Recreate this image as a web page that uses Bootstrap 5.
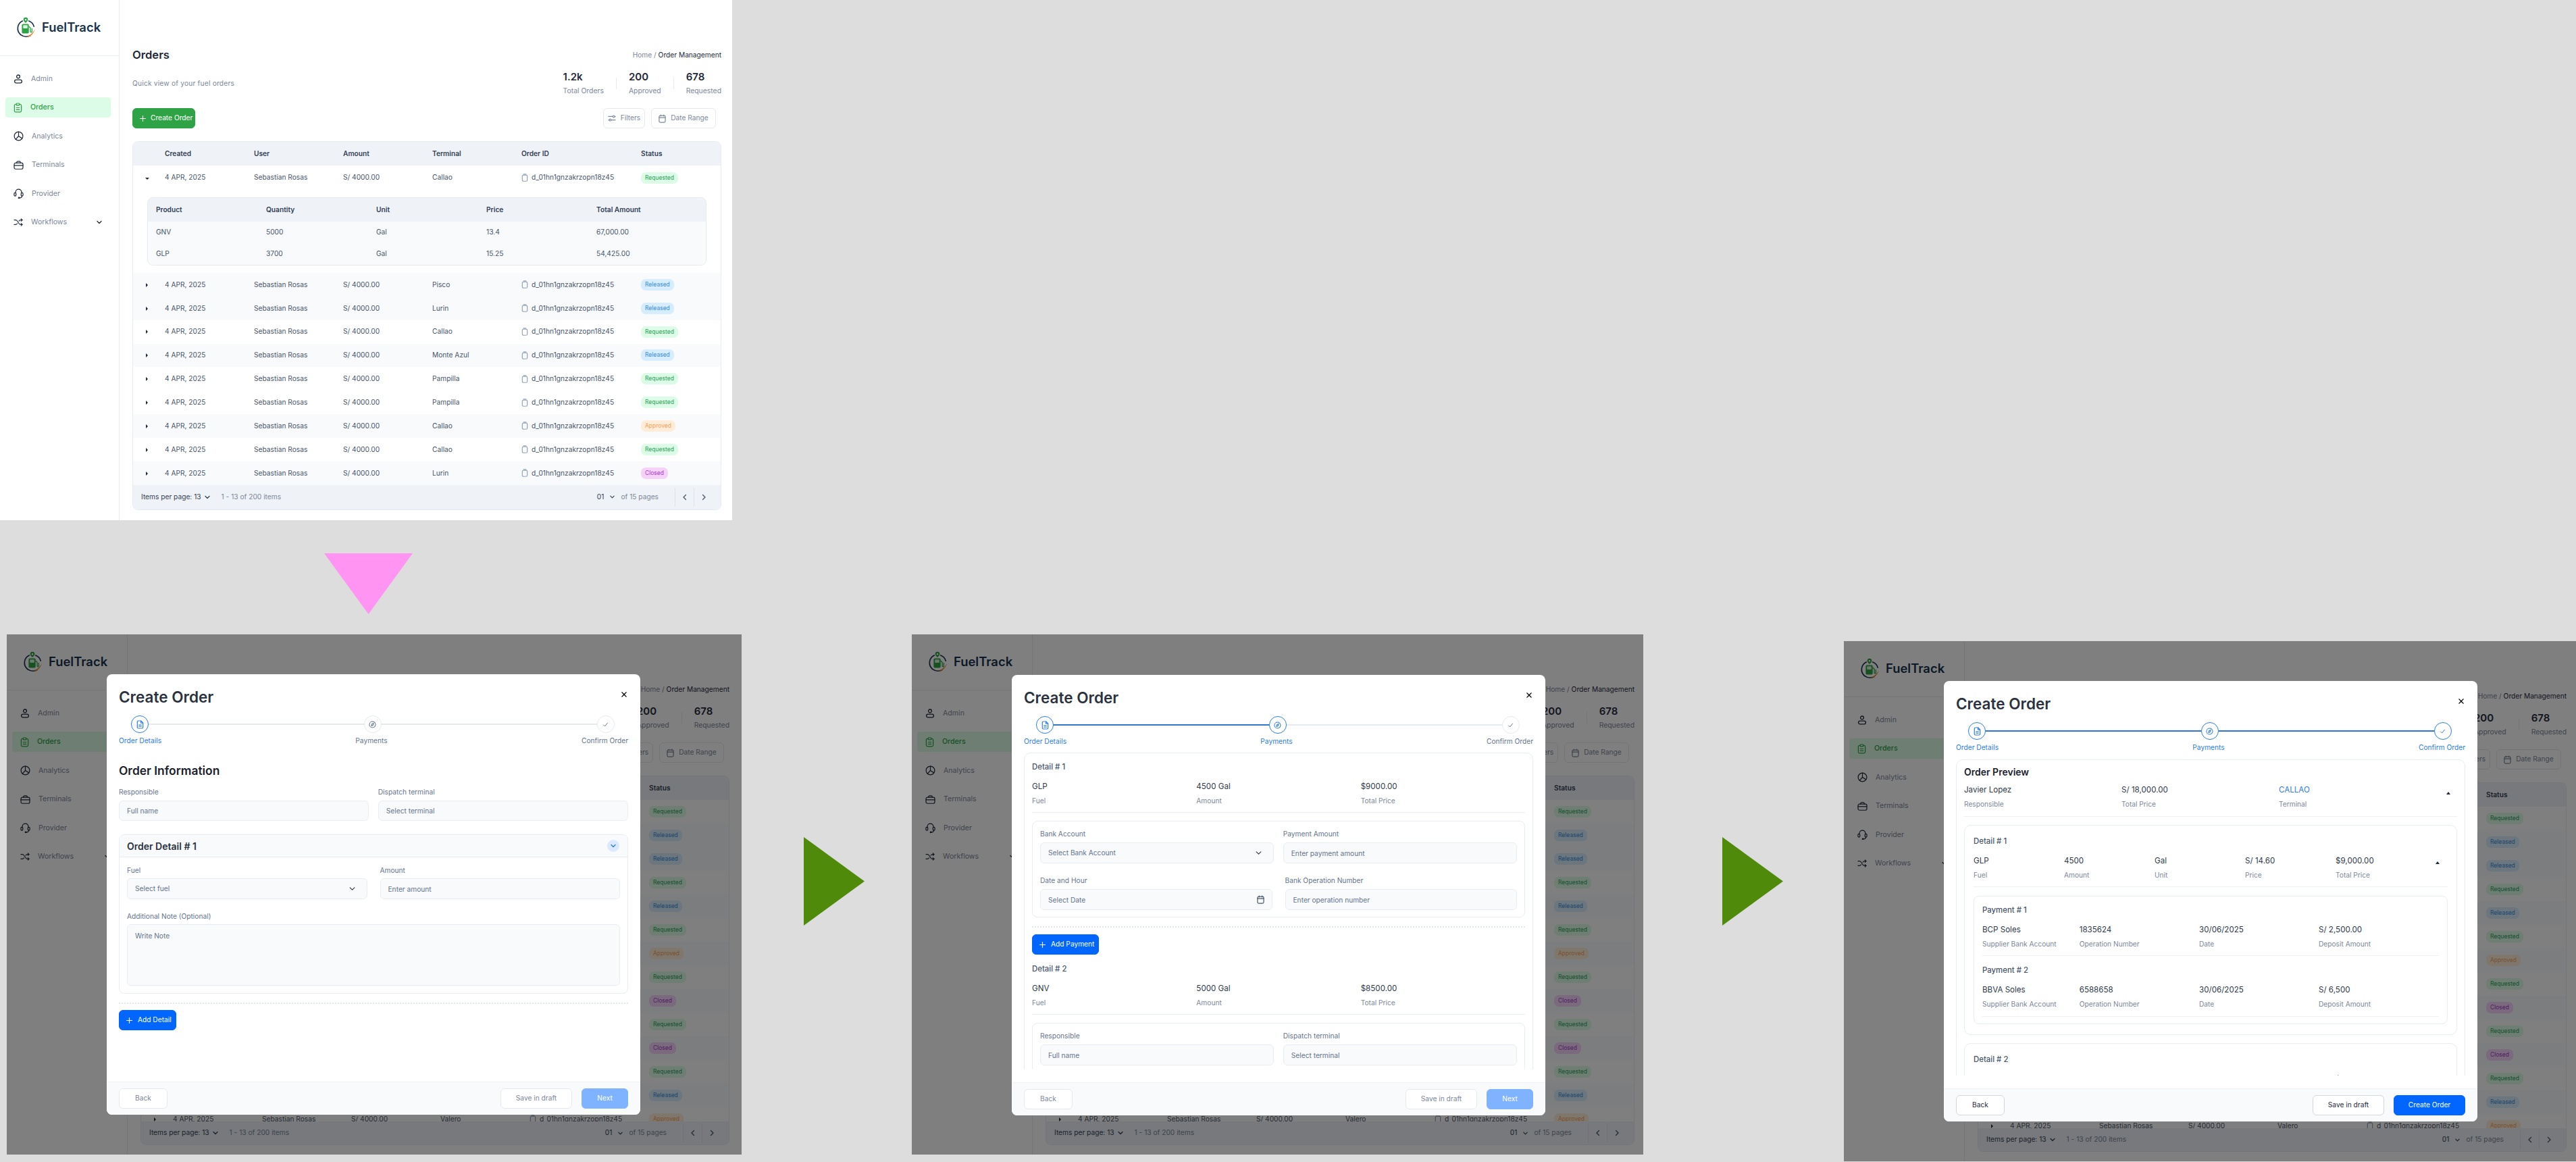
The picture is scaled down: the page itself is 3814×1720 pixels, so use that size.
<!DOCTYPE html>
<html lang="en">
<head>
  <meta charset="UTF-8">
  <meta name="viewport" content="width=device-width, initial-scale=1.0">
  <title>FuelTrack - Create Order flow</title>
  <link href="https://cdn.jsdelivr.net/npm/bootstrap@5.3.0/dist/css/bootstrap.min.css" rel="stylesheet">
  <style>
    html, body { height: 1720px; overflow: hidden; }
    body { position: relative; background: #dddddd; font-family: Inter, "Liberation Sans", sans-serif; font-size: 10.2px; color: #334155; }
    svg.ico { fill: none; stroke: currentColor; stroke-width: 1.3; stroke-linecap: round; stroke-linejoin: round; flex: none; }

    /* frames on the board */
    .ft-frame { position: absolute; overflow: hidden; background: #fff; height: 770px; }
    .ft-f1 { left: 0; top: 0; width: 1084px; }
    .ft-f2 { left: 10px; top: 939px; width: 1088px; }
    .ft-f3 { left: 1350px; top: 939px; width: 1083px; }
    .ft-f4 { left: 2730px; top: 949px; width: 1084px; }
    .ft-arrow { position: absolute; }
    .ft-a1 { left: 480px; top: 819px; }
    .ft-a2 { left: 1190px; top: 1239px; }
    .ft-a3 { left: 2550px; top: 1239px; }
    .ft-scrim { position: absolute; inset: 0; background: rgba(0, 0, 0, .5); }

    /* dashboard */
    .ft-dash { display: flex; height: 100%; width: 1084px; }
    .ft-wide { width: 1086px; }
    .ft-side { width: 177px; flex: none; border-right: 1px solid #e8ecf1; }
    .ft-wide .ft-side { width: 179px; }
    .ft-logo { height: 83px; border-bottom: 1px solid #e8ecf1; padding: 25px 0 0 23px; gap: 9px; }
    .ft-logo span { font-size: 18.4px; font-weight: 600; color: #17324d; line-height: 30px; }
    .ft-menu { margin-top: 19px; }
    .ft-item { height: 30px; margin: 0 12px 12.4px 8px; padding: 0 12px; gap: 12px; border-radius: 4px; font-size: 10.6px; color: #7b8798; }
    .ft-item svg { color: #1e293b; }
    .ft-item.ft-on { background: #dcfce7; color: #2ea043; font-weight: 500; }
    .ft-item.ft-on svg { color: #2ea043; }
    .ft-main { flex: 1; min-width: 0; padding: 68px 16px 0 19px; }
    .ft-h1 { font-size: 16.6px; font-weight: 600; color: #1e293b; line-height: 26px; margin: 0; }
    .ft-crumb { color: #7b8798; padding-top: 6px; }
    .ft-crumb b { font-weight: 400; color: #1e293b; }
    .ft-quick { color: #7b8798; font-size: 10.2px; letter-spacing: .2px; }
    .ft-stats { height: 43px; }
    .ft-stat-v { font-size: 15px; font-weight: 600; color: #1e293b; line-height: 22px; }
    .ft-stat-l { color: #7b8798; font-size: 10.4px; line-height: 20px; }
    .ft-stat-bar { width: 1px; height: 17px; background: #e6ebf1; margin: 0 18px; }
    .ft-btn { height: 30px; padding: 0 11px; border-radius: 6px; font-size: 10.2px; display: inline-flex; align-items: center; justify-content: center; gap: 7px; white-space: nowrap; }
    .ft-w93 { width: 93px; padding: 0 0 0 10px; justify-content: flex-start; }
    .ft-w62 { width: 62px; padding: 0; }
    .ft-w96 { width: 96px; padding: 0; }
    .ft-w72 { width: 72px; padding: 0; }
    .ft-w69 { width: 69px; padding: 0; }
    .ft-w106 { width: 106px; padding: 0; }
    .ft-add { padding: 0 6px 0 10px; gap: 8px; }
    .ft-gap14 { gap: 14px; }
    .ft-green { background: #2ea345; border-color: #2ea345; color: #fff; }
    .ft-blue { background: #0066ff; border-color: #0066ff; color: #fff; }
    .ft-ghost { background: #fff; border: 1px solid #e5e9ef; color: #7b8798; }
    .ft-dark { color: #1e293b; border-color: #cfd6de; }
    .ft-off { background: #7fb3ff; border-color: #7fb3ff; color: #fff; opacity: 1; }
    .ft-tools { margin: 15px 0 19px; }
    .ft-tools-r { margin-right: 8px; gap: 9px; }
    .ft-box { border: 1px solid #e6ebf1; border-radius: 8px; overflow: hidden; }
    .ft-wide .ft-scroll { height: 511px; overflow: hidden; }
    .ft-table { --bs-table-bg: transparent; --bs-table-color: #475569; table-layout: fixed; margin: 0; font-size: 10.2px; color: #475569; }
    .ft-table > :not(caption) > * > * { padding: 0; vertical-align: middle; border: 0; box-shadow: none; }
    .ft-table thead tr { background: #eff3f8; height: 35px; }
    .ft-table th { font-weight: 600; color: #334155; }
    .ft-row { height: 34.85px; }
    .ft-wide .ft-row { height: 35px; }
    .ft-row.ft-first { height: 36px; }
    .ft-tint { background: #f8fafc; }
    .ft-caret { width: 0; height: 0; display: inline-block; margin-left: 19px; border-style: solid; border-color: transparent; }
    .ft-caret.ft-right { border-width: 3.5px 0 3.5px 3.5px; border-left-color: #1e293b; }
    .ft-caret.ft-down { border-width: 3.5px 3.5px 0 3.5px; border-top-color: #1e293b; margin-left: 18px; }
    .ft-up { width: 0; height: 0; border-style: solid; border-color: transparent; border-width: 0 3.5px 4px 3.5px; border-bottom-color: #1e293b; }
    .ft-oid { gap: 5px; }
    .ft-oid svg { color: #94a3b8; }
    .ft-pill { font-size: 8.5px; font-weight: 400; height: 17px; line-height: 17px; padding: 0 6px; border-radius: 7px; }
    .ft-req { background: #dcfce7; color: #2ea35a; }
    .ft-rel { background: #d6ecff; color: #3b8fd6; }
    .ft-app { background: #ffedd9; color: #f4a261; }
    .ft-clo { background: #f6d2fb; color: #a73ec9; }
    .ft-sub-cell { padding: 11px 21px 11px 21px !important; }
    .ft-sub { border: 1px solid #e6ebf1; border-radius: 8px; overflow: hidden; background: #f8fafc; }
    .ft-sub-in thead tr { height: 35px; }
    .ft-sub-in tbody tr { height: 32px; }
    .ft-sub-in > :not(caption) > * > *:first-child { padding-left: 12px; }
    .ft-foot { height: 36px; background: #eff3f8; padding-left: 12px; color: #334155; }
    .ft-wide .ft-foot { height: 34px; }
    .ft-foot .ft-mute { color: #7b8798; }
    .ft-pg { width: 28px; height: 28px; border-left: 1px solid #dde3ea; color: #475569; }
    .ft-pg-last { margin-right: 12px; }

    /* modal */
    .ft-dialog { position: absolute; left: 148px; top: 59px; width: 790px; height: 652px; background-color: #fff; border: 0; border-radius: 8px; overflow: hidden; display: flex; flex-direction: column; }
    .ft-f3 .ft-dialog { top: 60px; }
    .ft-dlg-head { padding: 18px 18px 0; height: 50px; border: 0; align-items: center; flex: none; }
    .ft-dlg-title { font-size: 22.5px; font-weight: 600; color: #2a3240; line-height: 32px; margin: 0; }
    .ft-x { width: 10px; height: 10px; padding: 0; margin: 0 1px 8px 0 !important; background-size: 10px; opacity: 1; }
    .ft-steps { padding: 11px 18px 0; flex: none; height: 54px; }
    .ft-track { padding: 0 20.5px 0 18px; }
    .ft-dot { width: 26px; height: 26px; border-radius: 50%; border: 1px solid #e6ebf1; color: #64748b; background: #fff; flex: none; }
    .ft-dot.ft-done { border: 1.5px solid #2b7de9; color: #2b7de9; }
    .ft-line { flex: 1; height: 2px; background: #e6ebf1; }
    .ft-line.ft-done { height: 2.5px; background: #2f78c9; }
    .ft-labels { margin-top: 5px; line-height: 12px; font-size: 10.2px; color: #64748b; }
    .ft-labels .ft-done { color: #2b7de9; }
    .ft-dlg-body { height: 480px; flex: none; padding: 0 18px; overflow: hidden; margin-bottom: 19px; }
    .ft-dlg-foot { height: 49px; flex: none; padding: 0 18px; background: #f8fafc; border-top: 1px solid #eef2f6; border-radius: 0; }
    .ft-dlg-foot > * { margin: 0; }
    .ft-sec { font-size: 17.4px; font-weight: 600; color: #1a202c; line-height: 24px; margin: 27px 0 12px; }
    .ft-lab { display: block; color: #64748b; font-size: 10.2px; line-height: 14px; margin-bottom: 6px; }
    .ft-ctl { height: 30px; min-height: 30px; padding: 0 11px; border: 1px solid #e8edf3; border-radius: 6px; background-color: #f8fafc; font-size: 10.2px; color: #64748b; }
    .ft-ctl::placeholder { color: #64748b; opacity: 1; }
    .ft-tall { height: 31px; min-height: 31px; }
    textarea.ft-ctl { height: 91px; padding-top: 9px; resize: none; }
    select.ft-ctl { background-position: right 16px center; background-size: 11px 9px; padding-right: 30px; }
    .ft-two { display: grid; grid-template-columns: 1fr 1fr; column-gap: 13.5px; }
    .ft-two-w { column-gap: 19px; }
    .ft-detail { margin-top: 20px; border: 1px solid #e8edf3; border-radius: 8px; }
    .ft-detail-h { height: 33px; background: #f8fafc; padding: 0 12px 0 11px; border-bottom: 1px solid #e8edf3; border-radius: 8px 8px 0 0; font-size: 14px; font-weight: 600; color: #2a3240; }
    .ft-detail-in { padding: 12px 11px 11px; }
    .ft-detail-in .ft-lab { margin-bottom: 5px; }
    .ft-detail-in .ft-note { margin-top: 18px; }
    .ft-chev { width: 18px; height: 18px; border-radius: 50%; background: #dbeafe; color: #2b7de9; }
    .ft-dash-rule { border-top: 2px dotted #e2e7ed; opacity: 1; margin: 13px 0 9px; }
    .ft-rule-pay { margin: 13px 0 10px; }
    .ft-panel { border: 1px solid #e8edf3; border-radius: 10px; padding: 13px 11px 0; margin-top: 11px; min-height: 600px; }
    .ft-sub-t { color: #475569; font-size: 11.4px; font-weight: 500; line-height: 14px; }
    .ft-sub-t.ft-next { margin-top: 14px; }
    .ft-val { color: #2f3a4a; font-size: 11.6px; line-height: 14px; margin-top: 15px; }
    .ft-key { color: #7b8798; font-size: 10.2px; line-height: 14px; margin-top: 7px; }
    .ft-rule { border-top: 1px solid #edf0f4; opacity: 1; margin: 10px 0 12px; }
    .ft-rule-d { margin-bottom: 13px; }
    .ft-inner { border: 1px solid #e8edf3; border-radius: 8px; padding: 11px 11px 10px; }
    .ft-gap-t { margin-top: 18px; }
    .ft-rel-box { position: relative; }
    .ft-in-ico { position: absolute; right: 12px; top: 9px; color: #475569; }

    /* confirm step */
    .ft-g3 { display: grid; grid-template-columns: 233px 233px 1fr 16px; padding-right: 10px; }
    .ft-g6 { display: grid; grid-template-columns: repeat(5, 134px) 1fr; padding-right: 12px; }
    .ft-g4 { display: grid; grid-template-columns: 143.7px 177.3px 177px 1fr; }
    .ft-p1 { border: 1px solid #e8edf3; border-radius: 10px; padding: 10px 11px 0; margin-top: 12px; min-height: 600px; }
    .ft-prev { font-size: 14px; font-weight: 600; color: #1a202c; line-height: 16px; }
    .ft-p2 { border: 1px solid #e8edf3; border-radius: 10px; padding: 16px 13px 15px; margin-top: 12px; }
    .ft-p3 { border: 1px solid #e8edf3; border-radius: 8px; padding: 13px 12px 10px; }
    .ft-v1 { margin-top: 11px; }
    .ft-rule2 { border-top: 1px solid #edf0f4; opacity: 1; margin: 11px 0 0; }
    .ft-rule3 { border-top: 1px solid #edf0f4; opacity: 1; margin: 10px 0 14px; }
    .ft-link { color: #2b7de9; }
    .ft-end { align-self: center; justify-self: end; }
  </style>
</head>

<body>
  <svg width="0" height="0" class="position-absolute">
    <symbol id="i-user" viewBox="0 0 14 14"><circle cx="7" cy="3.4" r="2.4"/><rect x="1.6" y="8.2" width="10.8" height="4.6" rx="2.3"/></symbol>
    <symbol id="i-clip" viewBox="0 0 14 16"><path d="M4.3 2.6H3.2a1.7 1.7 0 0 0-1.7 1.7v8.5a2 2 0 0 0 2 2h7a2 2 0 0 0 2-2V4.3a1.7 1.7 0 0 0-1.7-1.7H9.7"/><rect x="4.3" y="1" width="5.4" height="3" rx="1"/><path d="M4.6 8h4.8M4.6 11h4.8"/></symbol>
    <symbol id="i-pie" viewBox="0 0 16 16"><circle cx="8" cy="8" r="6.8"/><path d="M8 1.2V8l5.6 3.6"/><path d="M8 8l-4.5 5"/></symbol>
    <symbol id="i-case" viewBox="0 0 16 14"><rect x="1" y="3.4" width="14" height="9.8" rx="2.4"/><path d="M5 3.4V2.6A1.6 1.6 0 0 1 6.6 1h2.8A1.6 1.6 0 0 1 11 2.6v.8"/><path d="M1 7.4h14"/></symbol>
    <symbol id="i-head" viewBox="0 0 16 16"><path d="M3.2 7.2V6a4.8 4.8 0 0 1 9.6 0v1.2"/><rect x="1" y="6.8" width="3" height="5" rx="1.4"/><rect x="12" y="6.8" width="3" height="5" rx="1.4"/><path d="M13.4 11.8c0 1.9-1.6 3-3.6 3"/><circle cx="8.6" cy="14.8" r=".8"/></symbol>
    <symbol id="i-shuf" viewBox="0 0 16 14"><path d="M1 3h2.4c1.4 0 2.2.7 3 1.9l2.8 4.2c.8 1.2 1.7 1.9 3 1.9H15"/><path d="M1 11h2.4c1.4 0 2.2-.7 3-1.9M9.2 4.9c.8-1.2 1.7-1.9 3-1.9H15"/><path d="M13 1l2 2-2 2M13 9l2 2-2 2"/></symbol>
    <symbol id="i-chev" viewBox="0 0 10 10"><path d="M2 3.5 5 6.5 8 3.5"/></symbol>
    <symbol id="i-left" viewBox="0 0 10 10"><path d="M6.5 1.5 3 5l3.5 3.5"/></symbol>
    <symbol id="i-right" viewBox="0 0 10 10"><path d="M3.5 1.5 7 5 3.5 8.5"/></symbol>
    <symbol id="i-plus" viewBox="0 0 10 10"><path d="M5 .5v9M.5 5h9"/></symbol>
    <symbol id="i-filt" viewBox="0 0 14 14"><path d="M1 4h7M12 4h1M1 10h1M6 10h7"/><circle cx="10" cy="4" r="1.7"/><circle cx="4" cy="10" r="1.7"/></symbol>
    <symbol id="i-cal" viewBox="0 0 12 14"><rect x="1" y="2.2" width="10" height="11" rx="2"/><path d="M1 5.6h10M3.6 1v2M8.4 1v2"/></symbol>
    <symbol id="i-copy" viewBox="0 0 10 13"><rect x="1" y="2.2" width="8" height="10" rx="2"/><path d="M3 1h4"/></symbol>
    <symbol id="i-file" viewBox="0 0 12 14"><path d="M7.4 1H3a1.6 1.6 0 0 0-1.6 1.6v8.8A1.6 1.6 0 0 0 3 13h6a1.6 1.6 0 0 0 1.6-1.6V4.2z"/><path d="M7.2 1.2v3.2h3.2M4 7.6h4M4 10h4"/></symbol>
    <symbol id="i-comp" viewBox="0 0 14 14"><circle cx="7" cy="7" r="5.8"/><path d="M9.2 4.4 8.2 8 5 9.6 5.8 6z"/></symbol>
    <symbol id="i-check" viewBox="0 0 12 12"><path d="M2 6.6 4.8 9.4 10 2.8"/></symbol>
  </svg>

  <!-- 1: orders list -->
  <section class="ft-frame ft-f1"><div data-dash="open"></div></section>

  <svg class="ft-arrow ft-a1" width="131" height="90" viewBox="0 0 131 90"><polygon points="0,0 131,0 65.5,90" fill="#ff94f2"/></svg>
  <svg class="ft-arrow ft-a2" width="90" height="131" viewBox="0 0 90 131"><polygon points="0,0 90,65.5 0,131" fill="#4f8a0b"/></svg>
  <svg class="ft-arrow ft-a3" width="90" height="131" viewBox="0 0 90 131"><polygon points="0,0 90,65.5 0,131" fill="#4f8a0b"/></svg>

  <!-- 2: order details -->
  <section class="ft-frame ft-f2">
    <div data-dash="wide"></div>
    <div class="ft-scrim"></div>
    <div class="modal-content ft-dialog">
      <div class="modal-header ft-dlg-head">
        <h2 class="ft-dlg-title">Create Order</h2>
        <button type="button" class="btn-close ft-x" aria-label="Close"></button>
      </div>
      <div class="ft-steps">
        <div class="d-flex align-items-center ft-track">
          <div class="ft-dot ft-done d-flex align-items-center justify-content-center"><svg class="ico" width="11" height="13"><use href="#i-file"/></svg></div>
          <div class="ft-line"></div>
          <div class="ft-dot d-flex align-items-center justify-content-center"><svg class="ico" width="11" height="11"><use href="#i-comp"/></svg></div>
          <div class="ft-line"></div>
          <div class="ft-dot d-flex align-items-center justify-content-center"><svg class="ico" width="9" height="9"><use href="#i-check"/></svg></div>
        </div>
        <div class="d-flex justify-content-between ft-labels"><span class="ft-done">Order Details</span><span>Payments</span><span>Confirm Order</span></div>
      </div>
      <div class="modal-body ft-dlg-body">
        <h3 class="ft-sec">Order Information</h3>
        <div class="ft-two">
          <div><label class="ft-lab">Responsible</label><input class="form-control ft-ctl" placeholder="Full name"></div>
          <div><label class="ft-lab">Dispatch terminal</label><input class="form-control ft-ctl" placeholder="Select terminal"></div>
        </div>
        <div class="ft-detail">
          <div class="d-flex align-items-center justify-content-between ft-detail-h">
            <span>Order Detail # 1</span>
            <span class="ft-chev d-flex align-items-center justify-content-center"><svg class="ico" width="10" height="10"><use href="#i-chev"/></svg></span>
          </div>
          <div class="ft-detail-in">
            <div class="ft-two ft-two-w">
              <div><label class="ft-lab">Fuel</label><select class="form-select ft-ctl ft-tall"><option>Select fuel</option></select></div>
              <div><label class="ft-lab">Amount</label><input class="form-control ft-ctl ft-tall" placeholder="Enter amount"></div>
            </div>
            <label class="ft-lab ft-note">Additional Note (Optional)</label>
            <textarea class="form-control ft-ctl" placeholder="Write Note"></textarea>
          </div>
        </div>
        <hr class="ft-dash-rule">
        <button type="button" class="btn ft-btn ft-add ft-blue"><svg class="ico" width="9" height="9"><use href="#i-plus"/></svg>Add Detail</button>
      </div>
      <div class="modal-footer ft-dlg-foot justify-content-between">
        <button type="button" class="btn ft-btn ft-w72 ft-ghost">Back</button>
        <div class="d-flex ft-gap14">
          <button type="button" class="btn ft-btn ft-w106 ft-ghost">Save in draft</button>
          <button type="button" class="btn ft-btn ft-w69 ft-off">Next</button>
        </div>
      </div>
    </div>
  </section>

  <!-- 3: payments -->
  <section class="ft-frame ft-f3">
    <div data-dash="wide"></div>
    <div class="ft-scrim"></div>
    <div class="modal-content ft-dialog">
      <div class="modal-header ft-dlg-head">
        <h2 class="ft-dlg-title">Create Order</h2>
        <button type="button" class="btn-close ft-x" aria-label="Close"></button>
      </div>
      <div class="ft-steps">
        <div class="d-flex align-items-center ft-track">
          <div class="ft-dot ft-done d-flex align-items-center justify-content-center"><svg class="ico" width="11" height="13"><use href="#i-file"/></svg></div>
          <div class="ft-line ft-done"></div>
          <div class="ft-dot ft-done d-flex align-items-center justify-content-center"><svg class="ico" width="11" height="11"><use href="#i-comp"/></svg></div>
          <div class="ft-line"></div>
          <div class="ft-dot d-flex align-items-center justify-content-center"><svg class="ico" width="9" height="9"><use href="#i-check"/></svg></div>
        </div>
        <div class="d-flex justify-content-between ft-labels"><span class="ft-done">Order Details</span><span class="ft-done">Payments</span><span>Confirm Order</span></div>
      </div>
      <div class="modal-body ft-dlg-body">
        <div class="ft-panel">
          <div class="ft-sub-t">Detail # 1</div>
          <div class="row g-0">
            <div class="col-4"><div class="ft-val">GLP</div><div class="ft-key">Fuel</div></div>
            <div class="col-4"><div class="ft-val">4500 Gal</div><div class="ft-key">Amount</div></div>
            <div class="col-4"><div class="ft-val">$9000.00</div><div class="ft-key">Total Price</div></div>
          </div>
          <hr class="ft-rule">
          <div class="ft-inner">
            <div class="ft-two">
              <div><label class="ft-lab">Bank Account</label><select class="form-select ft-ctl ft-tall"><option>Select Bank Account</option></select></div>
              <div><label class="ft-lab">Payment Amount</label><input class="form-control ft-ctl ft-tall" placeholder="Enter payment amount"></div>
            </div>
            <div class="ft-two ft-two-w ft-gap-t">
              <div><label class="ft-lab">Date and Hour</label><div class="ft-rel-box"><input class="form-control ft-ctl ft-tall" placeholder="Select Date"><svg class="ico ft-in-ico" width="11" height="13"><use href="#i-cal"/></svg></div></div>
              <div><label class="ft-lab">Bank Operation Number</label><input class="form-control ft-ctl ft-tall" placeholder="Enter operation number"></div>
            </div>
          </div>
          <hr class="ft-dash-rule ft-rule-pay">
          <button type="button" class="btn ft-btn ft-add ft-blue"><svg class="ico" width="9" height="9"><use href="#i-plus"/></svg>Add Payment</button>
          <div class="ft-sub-t ft-next">Detail # 2</div>
          <div class="row g-0">
            <div class="col-4"><div class="ft-val">GNV</div><div class="ft-key">Fuel</div></div>
            <div class="col-4"><div class="ft-val">5000 Gal</div><div class="ft-key">Amount</div></div>
            <div class="col-4"><div class="ft-val">$8500.00</div><div class="ft-key">Total Price</div></div>
          </div>
          <hr class="ft-rule">
          <div class="ft-inner">
            <div class="ft-two">
              <div><label class="ft-lab">Responsible</label><input class="form-control ft-ctl ft-tall" placeholder="Full name"></div>
              <div><label class="ft-lab">Dispatch terminal</label><input class="form-control ft-ctl ft-tall" placeholder="Select terminal"></div>
            </div>
          </div>
        </div>
      </div>
      <div class="modal-footer ft-dlg-foot justify-content-between">
        <button type="button" class="btn ft-btn ft-w72 ft-ghost">Back</button>
        <div class="d-flex ft-gap14">
          <button type="button" class="btn ft-btn ft-w106 ft-ghost">Save in draft</button>
          <button type="button" class="btn ft-btn ft-w69 ft-off">Next</button>
        </div>
      </div>
    </div>
  </section>

  <!-- 4: confirm order -->
  <section class="ft-frame ft-f4">
    <div data-dash="wide"></div>
    <div class="ft-scrim"></div>
    <div class="modal-content ft-dialog">
      <div class="modal-header ft-dlg-head">
        <h2 class="ft-dlg-title">Create Order</h2>
        <button type="button" class="btn-close ft-x" aria-label="Close"></button>
      </div>
      <div class="ft-steps">
        <div class="d-flex align-items-center ft-track">
          <div class="ft-dot ft-done d-flex align-items-center justify-content-center"><svg class="ico" width="11" height="13"><use href="#i-file"/></svg></div>
          <div class="ft-line ft-done"></div>
          <div class="ft-dot ft-done d-flex align-items-center justify-content-center"><svg class="ico" width="11" height="11"><use href="#i-comp"/></svg></div>
          <div class="ft-line ft-done"></div>
          <div class="ft-dot ft-done d-flex align-items-center justify-content-center"><svg class="ico" width="9" height="9"><use href="#i-check"/></svg></div>
        </div>
        <div class="d-flex justify-content-between ft-labels"><span class="ft-done">Order Details</span><span class="ft-done">Payments</span><span class="ft-done">Confirm Order</span></div>
      </div>
      <div class="modal-body ft-dlg-body">
        <div class="ft-p1">
          <div class="ft-prev">Order Preview</div>
          <div class="ft-g3">
            <div><div class="ft-val ft-v1">Javier Lopez</div><div class="ft-key">Responsible</div></div>
            <div><div class="ft-val ft-v1">S/ 18,000.00</div><div class="ft-key">Total Price</div></div>
            <div><div class="ft-val ft-v1 ft-link">CALLAO</div><div class="ft-key">Terminal</div></div>
            <div class="ft-up ft-end"></div>
          </div>
          <hr class="ft-rule2">
          <div class="ft-p2">
            <div class="ft-sub-t">Detail # 1</div>
            <div class="ft-g6">
              <div><div class="ft-val">GLP</div><div class="ft-key">Fuel</div></div>
              <div><div class="ft-val">4500</div><div class="ft-key">Amount</div></div>
              <div><div class="ft-val">Gal</div><div class="ft-key">Unit</div></div>
              <div><div class="ft-val">S/ 14.60</div><div class="ft-key">Price</div></div>
              <div><div class="ft-val">$9,000.00</div><div class="ft-key">Total Price</div></div>
              <div class="ft-up ft-end"></div>
            </div>
            <hr class="ft-rule ft-rule-d">
            <div class="ft-p3">
              <div class="ft-sub-t">Payment # 1</div>
              <div class="ft-g4">
                <div><div class="ft-val">BCP Soles</div><div class="ft-key">Supplier Bank Account</div></div>
                <div><div class="ft-val">1835624</div><div class="ft-key">Operation Number</div></div>
                <div><div class="ft-val">30/06/2025</div><div class="ft-key">Date</div></div>
                <div><div class="ft-val">S/ 2,500.00</div><div class="ft-key">Deposit Amount</div></div>
              </div>
              <hr class="ft-rule3">
              <div class="ft-sub-t">Payment # 2</div>
              <div class="ft-g4">
                <div><div class="ft-val">BBVA Soles</div><div class="ft-key">Supplier Bank Account</div></div>
                <div><div class="ft-val">6588658</div><div class="ft-key">Operation Number</div></div>
                <div><div class="ft-val">30/06/2025</div><div class="ft-key">Date</div></div>
                <div><div class="ft-val">S/ 6,500</div><div class="ft-key">Deposit Amount</div></div>
              </div>
              <hr class="ft-rule2">
            </div>
          </div>
          <div class="ft-p2">
            <div class="ft-sub-t">Detail # 2</div>
            <div class="ft-g6">
              <div><div class="ft-val">GNV</div><div class="ft-key">Fuel</div></div>
              <div><div class="ft-val">5000</div><div class="ft-key">Amount</div></div>
              <div><div class="ft-val">Gal</div><div class="ft-key">Unit</div></div>
              <div><div class="ft-val">S/ 14.60</div><div class="ft-key">Price</div></div>
              <div><div class="ft-val">$9000.00</div><div class="ft-key">Total Price</div></div>
            </div>
          </div>
        </div>
      </div>
      <div class="modal-footer ft-dlg-foot justify-content-between">
        <button type="button" class="btn ft-btn ft-w72 ft-ghost ft-dark">Back</button>
        <div class="d-flex ft-gap14">
          <button type="button" class="btn ft-btn ft-w106 ft-ghost ft-dark">Save in draft</button>
          <button type="button" class="btn ft-btn ft-w106 ft-blue">Create Order</button>
        </div>
      </div>
    </div>
  </section>

  <script src="https://cdn.jsdelivr.net/npm/bootstrap@5.3.0/dist/js/bootstrap.bundle.min.js"></script>
  <script>
    const logo = `<svg width="30" height="32" viewBox="0 0 32 34" fill="none">
      <path d="M11 6.4A13 13 0 0 0 8 28" stroke="#17324d" stroke-width="1.8" stroke-linecap="round"/>
      <path d="M21 6.4A13 13 0 0 1 29 15" stroke="#17324d" stroke-width="1.8" stroke-linecap="round"/>
      <path d="M8 28c5 3.6 11 3.6 15 1.6" stroke="#17324d" stroke-width="1.8" stroke-linecap="round"/>
      <path d="M17 31.6c6 .4 11-4.4 14-12.6-3 5-8 10-14 12.6z" fill="#e9842c"/>
      <rect x="10" y="11" width="11" height="15" rx="1.8" fill="#2ea345"/>
      <rect x="12" y="13" width="7" height="5" rx=".8" fill="#d8f3de"/>
      <path d="M21 15l2.6 2.2V23a1.2 1.2 0 0 0 2.4 0v-5" stroke="#2ea345" stroke-width="1.4"/>
      <path d="M16 .8a3.6 3.6 0 0 1 3.6 3.6c0 2.2-3.6 5-3.6 5s-3.6-2.8-3.6-5A3.6 3.6 0 0 1 16 .8z" fill="#2ea345"/>
      <circle cx="16" cy="4.4" r="1.3" fill="#fff"/>
    </svg>`;

    const menu = [["Admin","i-user",14,14],["Orders","i-clip",13,15],["Analytics","i-pie",15,15],["Terminals","i-case",15,13],["Provider","i-head",15,15],["Workflows","i-shuf",14,12]];

    const pills = { Requested: "ft-req", Released: "ft-rel", Approved: "ft-app", Closed: "ft-clo" };

    // [terminal, status, tinted]
    const openRows = [["Pisco","Released",1],["Lurin","Released",1],["Callao","Requested",0],["Monte Azul","Released",1],["Pampilla","Requested",0],["Pampilla","Requested",0],["Callao","Approved",1],["Callao","Requested",0],["Lurin","Closed",1]];
    const wideRows = [["Callao","Requested",0],["Pisco","Released",1],["Lurin","Released",1],["Callao","Requested",0],["Monte Azul","Released",1],["Pampilla","Requested",0],["Pampilla","Approved",1],["Callao","Requested",0],["Lurin","Closed",1],["Callao","Requested",0],["Lurin","Closed",1],["Pisco","Requested",0],["Pampilla","Released",1],["Valero","Approved",0]];

    function row(r, first, open) {
      return `<tr class="ft-row ${first ? "ft-first" : ""} ${r[2] ? "ft-tint" : ""}">
        <td><span class="ft-caret ${open ? "ft-down" : "ft-right"}"></span></td>
        <td>4 APR, 2025</td><td>Sebastian Rosas</td><td>S/ 4000.00</td><td>${r[0]}</td>
        <td><span class="d-flex align-items-center ft-oid"><svg class="ico" width="10" height="12"><use href="#i-copy"/></svg>d_01hn1gnzakrzopn18z45</span></td>
        <td><span class="badge ft-pill ${pills[r[1]]}">${r[1]}</span></td>
      </tr>`;
    }

    const subTable = `<tr><td colspan="7" class="ft-sub-cell"><div class="ft-sub">
      <table class="table table-borderless ft-table ft-sub-in">
        <colgroup><col width="175"><col width="163"><col width="163"><col width="163"><col></colgroup>
        <thead><tr><th>Product</th><th>Quantity</th><th>Unit</th><th>Price</th><th>Total Amount</th></tr></thead>
        <tbody>
          <tr><td>GNV</td><td>5000</td><td>Gal</td><td>13.4</td><td>67,000.00</td></tr>
          <tr><td>GLP</td><td>3700</td><td>Gal</td><td>15.25</td><td>54,425.00</td></tr>
        </tbody>
      </table></div></td></tr>`;

    function dashboard(mode) {
      const open = mode === "open";
      const body = open
        ? row(["Callao","Requested",0], true, true) + subTable + openRows.map(r => row(r)).join("")
        : wideRows.map(r => row(r)).join("");
      return `<div class="ft-dash ${open ? "" : "ft-wide"}">
        <aside class="ft-side">
          <div class="d-flex align-items-start ft-logo">${logo}<span>FuelTrack</span></div>
          <nav class="ft-menu">
            ${menu.map(m => `<div class="d-flex align-items-center ft-item ${m[0] === "Orders" ? "ft-on" : ""}">
              <svg class="ico" width="${m[2]}" height="${m[3]}"><use href="#${m[1]}"/></svg><span class="flex-grow-1">${m[0]}</span>
              ${m[0] === "Workflows" ? `<svg class="ico" width="10" height="10"><use href="#i-chev"/></svg>` : ""}
            </div>`).join("")}
          </nav>
        </aside>
        <main class="ft-main">
          <div class="d-flex justify-content-between">
            <h1 class="ft-h1">Orders</h1>
            <div class="ft-crumb">Home / <b>Order Management</b></div>
          </div>
          <div class="d-flex justify-content-between align-items-center mt-2 pt-0 ft-stats">
            <div class="ft-quick">Quick view of your fuel orders</div>
            <div class="d-flex align-items-center">
              <div><div class="ft-stat-v">1.2k</div><div class="ft-stat-l">Total Orders</div></div>
              <div class="ft-stat-bar"></div>
              <div><div class="ft-stat-v">200</div><div class="ft-stat-l">Approved</div></div>
              <div class="ft-stat-bar"></div>
              <div><div class="ft-stat-v">678</div><div class="ft-stat-l">Requested</div></div>
            </div>
          </div>
          <div class="d-flex justify-content-between ft-tools">
            <button type="button" class="btn ft-btn ft-w93 ft-green"><svg class="ico" width="9" height="9"><use href="#i-plus"/></svg>Create Order</button>
            <div class="d-flex ft-tools-r">
              <button type="button" class="btn ft-btn ft-w62 ft-ghost"><svg class="ico" width="12" height="12"><use href="#i-filt"/></svg>Filters</button>
              <button type="button" class="btn ft-btn ft-w96 ft-ghost"><svg class="ico" width="11" height="13"><use href="#i-cal"/></svg>Date Range</button>
            </div>
          </div>
          <div class="ft-box">
            <div class="ft-scroll">
              <table class="table table-borderless ft-table">
                <colgroup><col width="47"><col width="132"><col width="132"><col width="132"><col width="132"><col width="177"><col></colgroup>
                <thead><tr><th></th><th>Created</th><th>User</th><th>Amount</th><th>Terminal</th><th>Order ID</th><th>Status</th></tr></thead>
                <tbody>${body}</tbody>
              </table>
            </div>
            <div class="d-flex align-items-center ft-foot">
              <span>Items per page: 13</span><svg class="ico ms-1 me-3" width="10" height="10"><use href="#i-chev"/></svg>
              <span class="ft-mute">1 - 13 of 200 items</span>
              <span class="ms-auto">01</span><svg class="ico mx-2" width="9" height="9"><use href="#i-chev"/></svg>
              <span class="ft-mute me-4">of 15 pages</span>
              <span class="ft-pg d-flex align-items-center justify-content-center"><svg class="ico" width="10" height="10"><use href="#i-left"/></svg></span>
              <span class="ft-pg ft-pg-last d-flex align-items-center justify-content-center"><svg class="ico" width="10" height="10"><use href="#i-right"/></svg></span>
            </div>
          </div>
        </main>
      </div>`;
    }

    document.querySelectorAll("[data-dash]").forEach(el => { el.outerHTML = dashboard(el.dataset.dash); });
  </script>
</body>
</html>
